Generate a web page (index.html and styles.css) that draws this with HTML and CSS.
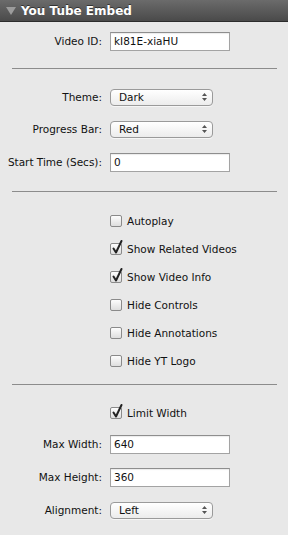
FILE: index.html
```html
<!DOCTYPE html>
<html lang="en">
<head>
  <meta charset="UTF-8" />
  <title>You Tube Embed</title>
  <link rel="stylesheet" href="styles.css">
</head>
<body>
  <div class="panel">
    <div class="panel-head">
      <svg class="disclosure" width="10" height="8" viewBox="0 0 10 8"><path d="M0 0 L10 0 L5 8 Z" fill="#9c9c9c"/></svg>
      <span>You Tube Embed</span>
    </div>

    <div class="section first">
      <div class="row">
        <label class="lbl">Video ID:</label>
        <div class="field">kI81E-xiaHU</div>
      </div>
    </div>
    <div class="rule"></div>

    <div class="section second">
      <div class="row">
        <label class="lbl">Theme:</label>
        <div class="popup"><span>Dark</span><svg class="updown" width="5" height="8" viewBox="0 0 5 8"><path d="M0 3 L2.5 0 L5 3 Z M0 5 L2.5 8 L5 5 Z" fill="#555"/></svg></div>
      </div>
      <div class="row">
        <label class="lbl">Progress Bar:</label>
        <div class="popup"><span>Red</span><svg class="updown" width="5" height="8" viewBox="0 0 5 8"><path d="M0 3 L2.5 0 L5 3 Z M0 5 L2.5 8 L5 5 Z" fill="#555"/></svg></div>
      </div>
      <div class="row tall">
        <label class="lbl">Start Time (Secs):</label>
        <div class="field">0</div>
      </div>
    </div>
    <div class="rule"></div>

    <div class="section third">
      <div class="check-row"><span class="box"></span>Autoplay</div>
      <div class="check-row"><span class="box on"><svg width="12" height="16" viewBox="0 0 12 16"><path d="M2.5 9.5 L5 13.5 L10.5 2" fill="none" stroke="#222" stroke-width="2" stroke-linecap="round" stroke-linejoin="round"/></svg></span>Show Related Videos</div>
      <div class="check-row"><span class="box on"><svg width="12" height="16" viewBox="0 0 12 16"><path d="M2.5 9.5 L5 13.5 L10.5 2" fill="none" stroke="#222" stroke-width="2" stroke-linecap="round" stroke-linejoin="round"/></svg></span>Show Video Info</div>
      <div class="check-row"><span class="box"></span>Hide Controls</div>
      <div class="check-row"><span class="box"></span>Hide Annotations</div>
      <div class="check-row"><span class="box"></span>Hide YT Logo</div>
    </div>
    <div class="rule"></div>

    <div class="section fourth">
      <div class="check-row"><span class="box on"><svg width="12" height="16" viewBox="0 0 12 16"><path d="M2.5 9.5 L5 13.5 L10.5 2" fill="none" stroke="#222" stroke-width="2" stroke-linecap="round" stroke-linejoin="round"/></svg></span>Limit Width</div>
      <div class="row">
        <label class="lbl">Max Width:</label>
        <div class="field">640</div>
      </div>
      <div class="row tall">
        <label class="lbl">Max Height:</label>
        <div class="field">360</div>
      </div>
      <div class="row">
        <label class="lbl">Alignment:</label>
        <div class="popup"><span>Left</span><svg class="updown" width="5" height="8" viewBox="0 0 5 8"><path d="M0 3 L2.5 0 L5 3 Z M0 5 L2.5 8 L5 5 Z" fill="#555"/></svg></div>
      </div>
    </div>
  </div>
</body>
</html>
```

FILE: styles.css
```css
/* Inspector-style panel */
body, html {
  margin: 0; padding: 0;
  height: 100%;
  background: #e8e8e8;
  color: #111;
  font-family: 'Lucida Grande', 'DejaVu Sans', Verdana, sans-serif;
  font-size: 10.5px;
}
.panel {
  min-height: 100%;
  background: #e8e8e8;
}
.panel-head {
  height: 21px;
  display: flex;
  align-items: center;
  gap: 5px;
  padding-left: 6px;
  background: linear-gradient(#6b6b6b, #4a4a4a);
  border-bottom: 1px solid #2c2c2c;
  color: #fff;
  font-weight: 700;
  font-size: 12px;
  text-shadow: 0 -1px 0 #333;
}
.disclosure {
  margin-top: 1px;
}
.section.first { padding: 3px 0 11px; }
.section.second { padding: 12px 0 12px; }
.section.third { padding: 15px 0 9px; }
.section.fourth { padding: 14px 0 6px; }
.rule {
  height: 1px;
  margin: 0 11px 0 12px;
  background: #8c8c8c;
}
.row {
  display: flex;
  align-items: center;
  height: 32px;
}
.row.tall {
  height: 34px;
}
.fourth .row:nth-child(2) {
  margin-top: 1px;
}
.lbl {
  width: 102px;
  padding-right: 8px;
  text-align: right;
  white-space: nowrap;
}
.field {
  width: 112px;
  height: 17px;
  line-height: 17px;
  padding: 0 3px;
  background: #fff;
  border: 1px solid #a3a3a3;
  border-top-color: #8e8e8e;
  box-shadow: inset 0 1px 1px rgb(0 0 0 / 0.08);
}
.popup {
  width: 88px;
  height: 15px;
  display: flex;
  align-items: center;
  justify-content: space-between;
  padding: 0 5px 0 8px;
  border: 1px solid #9a9a9a;
  border-radius: 4px;
  background: linear-gradient(#ffffff, #ececec);
  box-shadow: 0 1px 0 rgb(255 255 255 / 0.6);
}
.check-row {
  display: flex;
  align-items: center;
  height: 28px;
  padding-left: 110px;
}
.box {
  position: relative;
  width: 10px;
  height: 10px;
  margin-right: 5px;
  border: 1px solid #8a8a8a;
  border-radius: 2px;
  background: linear-gradient(#fdfdfd, #dedede);
}
.box svg {
  position: absolute;
  left: 0;
  top: -5px;
}
```
